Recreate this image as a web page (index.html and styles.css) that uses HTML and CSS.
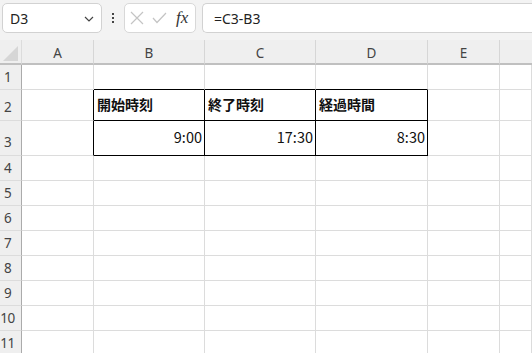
FILE: index.html
```html
<!DOCTYPE html>
<html lang="ja">
<head>
    <meta charset="UTF-8">
    <title>Sheet1</title>
    <link rel="stylesheet" href="styles.css">
</head>
<body>
    <div class="toolbar">
        <div class="name-box">
            <span>D3</span>
            <svg class="chevron" width="10" height="6" viewBox="0 0 10 6"><path d="M1 1 L5 5 L9 1" fill="none" stroke="#444" stroke-width="1.2"/></svg>
        </div>
        <div class="dots"><i></i><i></i><i></i></div>
        <div class="fn-box">
            <svg width="14" height="14" viewBox="0 0 14 14"><path d="M1 1 L13 13 M13 1 L1 13" stroke="#c4c4c4" stroke-width="1.2"/></svg>
            <svg width="15" height="12" viewBox="0 0 15 12"><path d="M1 6 L5 10.5 L14 1" fill="none" stroke="#c4c4c4" stroke-width="1.2"/></svg>
            <span class="fx">fx</span>
        </div>
        <div class="formula">=C3-B3</div>
    </div>

    <div class="sheet">
        <div class="corner"><span class="tri"></span></div>
        <div class="col-head">A</div>
        <div class="col-head">B</div>
        <div class="col-head">C</div>
        <div class="col-head">D</div>
        <div class="col-head">E</div>
        <div class="col-head last"></div>

        <!-- row 1 -->
        <div class="row-head">1</div>
        <div class="cell"></div>
        <div class="cell bb"></div>
        <div class="cell bb"></div>
        <div class="cell bb"></div>
        <div class="cell"></div>
        <div class="cell"></div>

        <!-- row 2 -->
        <div class="row-head r2">2</div>
        <div class="cell br"></div>
        <div class="cell br bb title">開始時刻</div>
        <div class="cell br bb title">終了時刻</div>
        <div class="cell br bb title">経過時間</div>
        <div class="cell"></div>
        <div class="cell"></div>

        <!-- row 3 -->
        <div class="row-head r3">3</div>
        <div class="cell br"></div>
        <div class="cell br bb num">9:00</div>
        <div class="cell br bb num">17:30</div>
        <div class="cell br bb num">8:30</div>
        <div class="cell"></div>
        <div class="cell"></div>
    </div>

    <script>
        // blank rows 4 to 11
        const sheet = document.querySelector('.sheet');
        for (let r = 4; r <= 11; r++) {
            const head = document.createElement('div');
            head.className = 'row-head';
            head.textContent = r;
            sheet.appendChild(head);
            for (let c = 0; c < 6; c++) {
                const cell = document.createElement('div');
                cell.className = 'cell';
                sheet.appendChild(cell);
            }
        }
    </script>
</body>
</html>
```

FILE: styles.css
```css
body {
    margin: 0;
    width: 532px;
    height: 353px;
    overflow: hidden;
    background-color: #f3f3f3;
    font-family: "Noto Sans", "Noto Sans CJK JP", sans-serif;
    color: #222;
}

/* Formula bar */
.toolbar {
    display: flex;
    align-items: flex-start;
    height: 40px;
    padding: 3px 0 0 2px;
    box-sizing: border-box;
}

.name-box {
    width: 100px;
    height: 30px;
    box-sizing: border-box;
    background-color: #fff;
    border: 1px solid #d2d2d2;
    border-radius: 5px;
    display: flex;
    align-items: center;
    justify-content: space-between;
    padding: 0 7px 0 7px;
    font-size: 14px;
}

.chevron {
    margin-top: 1px;
}

.dots {
    width: 22px;
    height: 30px;
    display: flex;
    flex-direction: column;
    align-items: center;
    justify-content: center;
    gap: 2px;
}

.dots i {
    width: 2px;
    height: 2px;
    background-color: #444;
}

.fn-box {
    width: 72px;
    height: 30px;
    box-sizing: border-box;
    background-color: #fff;
    border: 1px solid #d8d8d8;
    border-radius: 5px;
    display: flex;
    align-items: center;
    gap: 8px;
    padding: 0 0 0 5px;
}

.fx {
    font-family: "Liberation Serif", serif;
    font-style: italic;
    font-size: 17px;
    color: #333;
    margin-left: 1px;
}

.formula {
    flex: 1;
    height: 30px;
    margin-left: 6px;
    box-sizing: border-box;
    background-color: #fff;
    border: 1px solid #d2d2d2;
    border-right: none;
    border-radius: 5px 0 0 5px;
    padding: 0 0 0 11px;
    display: flex;
    align-items: center;
    font-size: 14px;
}

/* Grid */
.sheet {
    display: grid;
    grid-template-columns: 22px 72px 111px 111px 112px 72px 1fr;
    grid-template-rows: 25px 25px 31px 35px repeat(8, 25px);
    background-color: #fff;
}

.corner,
.col-head {
    background-color: #efefef;
    border-bottom: 2px solid #c0c0c0;
    box-sizing: border-box;
}

.corner {
    position: relative;
    border-right: 1px solid #dcdcdc;
}

.tri {
    position: absolute;
    right: 3px;
    bottom: 2px;
    width: 0;
    height: 0;
    border-left: 15px solid transparent;
    border-bottom: 15px solid #d6d6d6;
}

.col-head {
    border-right: 1px solid #d6d6d6;
    display: flex;
    align-items: center;
    justify-content: center;
    font-size: 13.5px;
    color: #444;
    padding-top: 2px;
}

.col-head.last {
    border-right: none;
}

.row-head {
    background-color: #efefef;
    border-right: 1px solid #ababab;
    border-bottom: 1px solid #dcdcdc;
    box-sizing: border-box;
    font-size: 13.5px;
    color: #444;
    text-align: center;
    line-height: 24px;
    padding-right: 6px;
    letter-spacing: -0.5px;
    white-space: nowrap;
    display: flex;
    align-items: center;
    justify-content: center;
}

.row-head.r2,
.row-head.r3 {
    align-items: flex-end;
    padding-bottom: 1px;
}

.cell {
    border-right: 1px solid #dcdcdc;
    border-bottom: 1px solid #dcdcdc;
    box-sizing: border-box;
    font-family: "Noto Sans CJK JP", sans-serif;
    font-size: 14px;
    color: #111;
    display: flex;
    align-items: flex-end;
    padding: 0 2px 5px 3px;
    white-space: nowrap;
}

.cell.br {
    border-right-color: #000;
}

.cell.bb {
    border-bottom-color: #000;
}

.title {
    font-weight: bold;
    padding-bottom: 6px;
}

.num {
    justify-content: flex-end;
    padding-bottom: 8px;
    font-size: 14.5px;
}
```
